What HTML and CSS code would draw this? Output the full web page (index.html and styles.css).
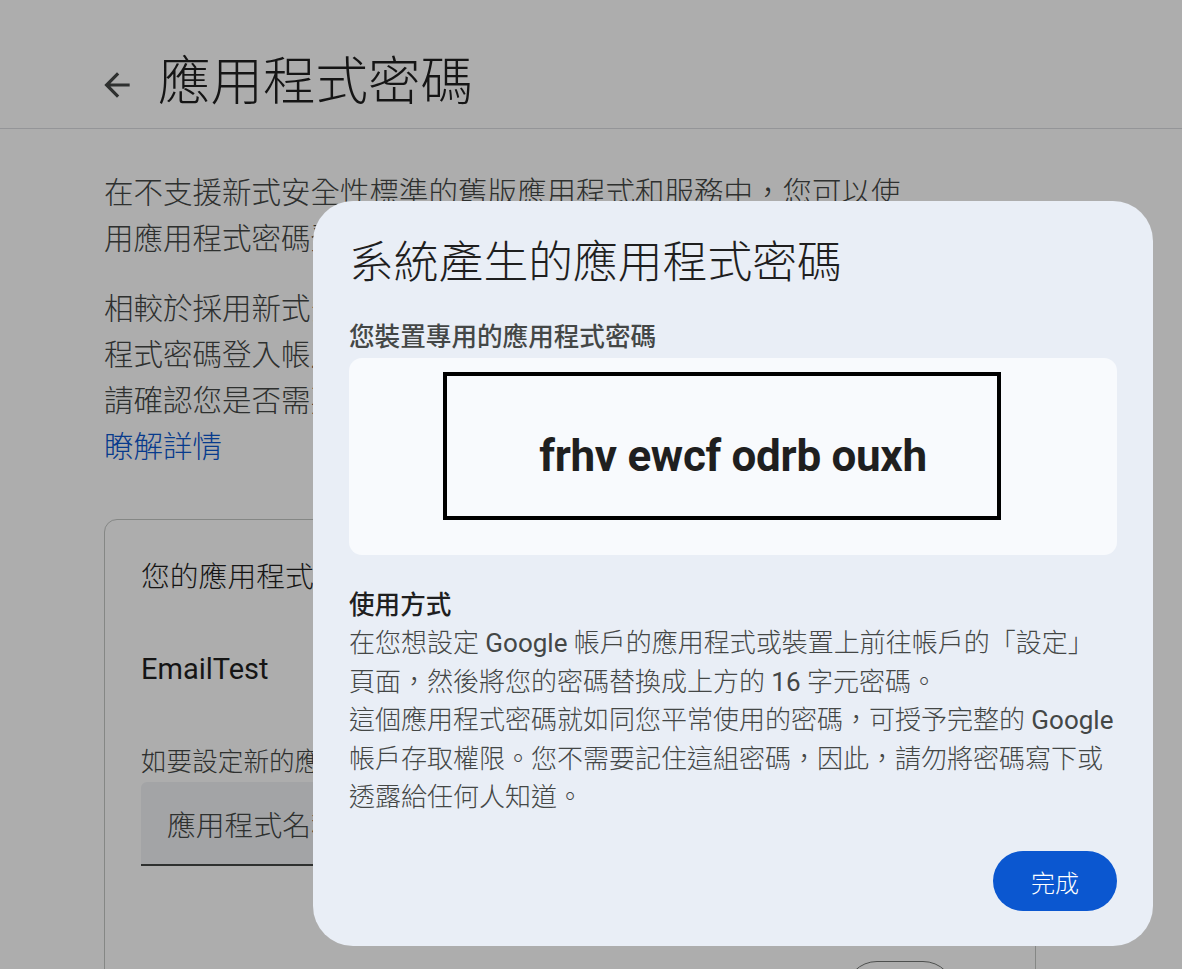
FILE: index.html
```html
<!DOCTYPE html>
<html lang="zh-Hant">
<head>
<meta charset="utf-8">
<title>應用程式密碼</title>
<link rel="stylesheet" href="styles.css">
</head>
<body>
<div class="page">
  <header class="topbar">
    <span class="back" aria-label="返回">
      <svg viewBox="0 0 24 24" width="38" height="38"><path d="M20 11H7.83l5.59-5.59L12 4l-8 8 8 8 1.41-1.41L7.83 13H20v-2z" fill="#444746"/></svg>
    </span>
    <h1 class="page-title">應用程式密碼</h1>
  </header>
  <main class="content">
    <p class="intro">在不支援新式安全性標準的舊版應用程式和服務中，您可以使<br>用應用程式密碼登入 <span class="latin">Google</span> 帳戶。</p>
    <p class="intro second">相較於採用新式安全性標準的最新應用程式和服務，使用應用<br>程式密碼登入帳戶的安全性較低。建立應用程式密碼前，<br>請確認您是否需要透過這個方式登入應用程式。</p>
    <a class="learn" href="#">瞭解詳情</a>

    <section class="card">
      <h2 class="card-title">您的應用程式密碼</h2>
      <div class="app-row">EmailTest</div>
      <p class="hint">如要設定新的應用程式密碼，請在下方輸入應用程式名稱</p>
      <div class="field"><span class="placeholder">應用程式名稱</span></div>
      <div class="actions"><span class="outline-btn">建立</span></div>
    </section>
  </main>
</div>

<div class="scrim"></div>

<div class="dialog" role="dialog">
  <h2 class="dlg-title">系統產生的應用程式密碼</h2>
  <div class="dlg-sub">您裝置專用的應用程式密碼</div>
  <div class="pw-area">
    <div class="pw-frame">frhv ewcf odrb ouxh</div>
  </div>
  <div class="usage">
    <div class="usage-head">使用方式</div>
    <div class="usage-body">在您想設定 <span class="latin">Google</span> 帳戶的應用程式或裝置上前往帳戶的「設定」<br>頁面，然後將您的密碼替換成上方的 <span class="latin">16</span> 字元密碼。<br>這個應用程式密碼就如同您平常使用的密碼，可授予完整的 <span class="latin">Google</span><br>帳戶存取權限。您不需要記住這組密碼，因此，請勿將密碼寫下或<br>透露給任何人知道。</div>
  </div>
  <div class="dlg-actions">
    <button class="done">完成</button>
  </div>
</div>
</body>
</html>
```

FILE: styles.css
```css
html, body {
  margin: 0;
  padding: 0;
  height: 100%;
  overflow: hidden;
}
body {
  background: #ffffff;
  font-family: Roboto, "Noto Sans CJK TC", "Noto Sans", sans-serif;
  color: #1f1f1f;
}
.latin {
  font-weight: 400;
}
.page {
  width: 1182px;
}
.topbar {
  display: flex;
  align-items: center;
  gap: 22px;
  padding: 50px 0 14px 98px;
  border-bottom: 1px solid #dadce0;
}
.back {
  display: flex;
  width: 38px;
  height: 38px;
  margin-top: 6px;
}
.page-title {
  margin: 0;
  font-size: 52.5px;
  line-height: 64px;
  font-weight: 300;
  color: #1f1f1f;
}
.content {
  padding: 41px 0 0 104px;
}
.intro {
  margin: 0;
  font-size: 29.5px;
  line-height: 46px;
  font-weight: 300;
  color: #444746;
  white-space: nowrap;
}
.intro.second {
  margin-top: 24px;
}
.learn {
  display: block;
  font-size: 29.5px;
  line-height: 46px;
  font-weight: 300;
  color: #0b57d0;
  text-decoration: none;
}
.card {
  margin-top: 49px;
  width: 932px;
  height: 600px;
  border: 1px solid #c4c7c5;
  border-radius: 13px;
  padding: 37px 36px 0 36px;
  box-sizing: border-box;
}
.card-title {
  margin: 0;
  font-size: 28.8px;
  line-height: 40px;
  font-weight: 300;
  color: #1f1f1f;
}
.app-row {
  margin-top: 52px;
  font-size: 29px;
  line-height: 40px;
  color: #1f1f1f;
}
.hint {
  margin: 54px 0 0;
  font-size: 25.6px;
  line-height: 38px;
  font-weight: 300;
  color: #444746;
}
.field {
  margin-top: 1px;
  height: 84px;
  box-sizing: border-box;
  background: #f0f2f5;
  border-bottom: 2px solid #444746;
  border-radius: 6px 6px 0 0;
  padding-left: 26px;
  display: flex;
  align-items: center;
}
.placeholder {
  font-size: 28.8px;
  font-weight: 300;
  color: #444746;
}
.actions {
  display: flex;
  justify-content: flex-end;
  margin-top: 95px;
  padding-right: 44px;
}
.outline-btn {
  width: 110px;
  height: 64px;
  border: 1px solid #747775;
  border-radius: 32px;
  box-sizing: border-box;
  display: flex;
  align-items: center;
  justify-content: center;
  font-size: 22px;
  color: #0b57d0;
}

.scrim {
  position: fixed;
  inset: 0;
  background: rgba(0, 0, 0, 0.32);
}

.dialog {
  position: fixed;
  left: 313px;
  top: 201px;
  width: 840px;
  box-sizing: border-box;
  padding: 33px 36px 35px 36px;
  background: #e9eef6;
  border-radius: 40px;
  display: flex;
  flex-direction: column;
}
.dlg-title {
  margin: 0;
  font-size: 44.8px;
  line-height: 57.6px;
  font-weight: 300;
  color: #1f1f1f;
}
.dlg-sub {
  margin-top: 26px;
  margin-bottom: 2px;
  font-size: 25.6px;
  line-height: 38.4px;
  font-weight: 500;
  color: #444746;
}
.pw-area {
  background: #f8fafd;
  border-radius: 13px;
  height: 197px;
  box-sizing: border-box;
  padding: 14px 0 0 94px;
}
.pw-frame {
  width: 558px;
  height: 148px;
  box-sizing: border-box;
  border: 4px solid #000000;
  padding: 54px 0 0 22px;
  text-align: center;
  font-family: Roboto, sans-serif;
  font-weight: 700;
  font-size: 44px;
  line-height: normal;
  letter-spacing: -0.3px;
  color: #1f1f1f;
}
.usage {
  margin-top: 31px;
  font-size: 26px;
  line-height: 38.4px;
}
.usage-head {
  font-weight: 500;
  font-size: 25.6px;
  color: #1f1f1f;
}
.usage-body {
  font-weight: 300;
  color: #444746;
  white-space: nowrap;
}
.dlg-actions {
  display: flex;
  justify-content: flex-end;
  margin-top: 35px;
}
.done {
  width: 124px;
  height: 60px;
  border: none;
  border-radius: 30px;
  background: #0b57d0;
  color: #ffffff;
  font-family: Roboto, "Noto Sans CJK TC", sans-serif;
  font-size: 24px;
  font-weight: 300;
  padding: 0;
}
```
